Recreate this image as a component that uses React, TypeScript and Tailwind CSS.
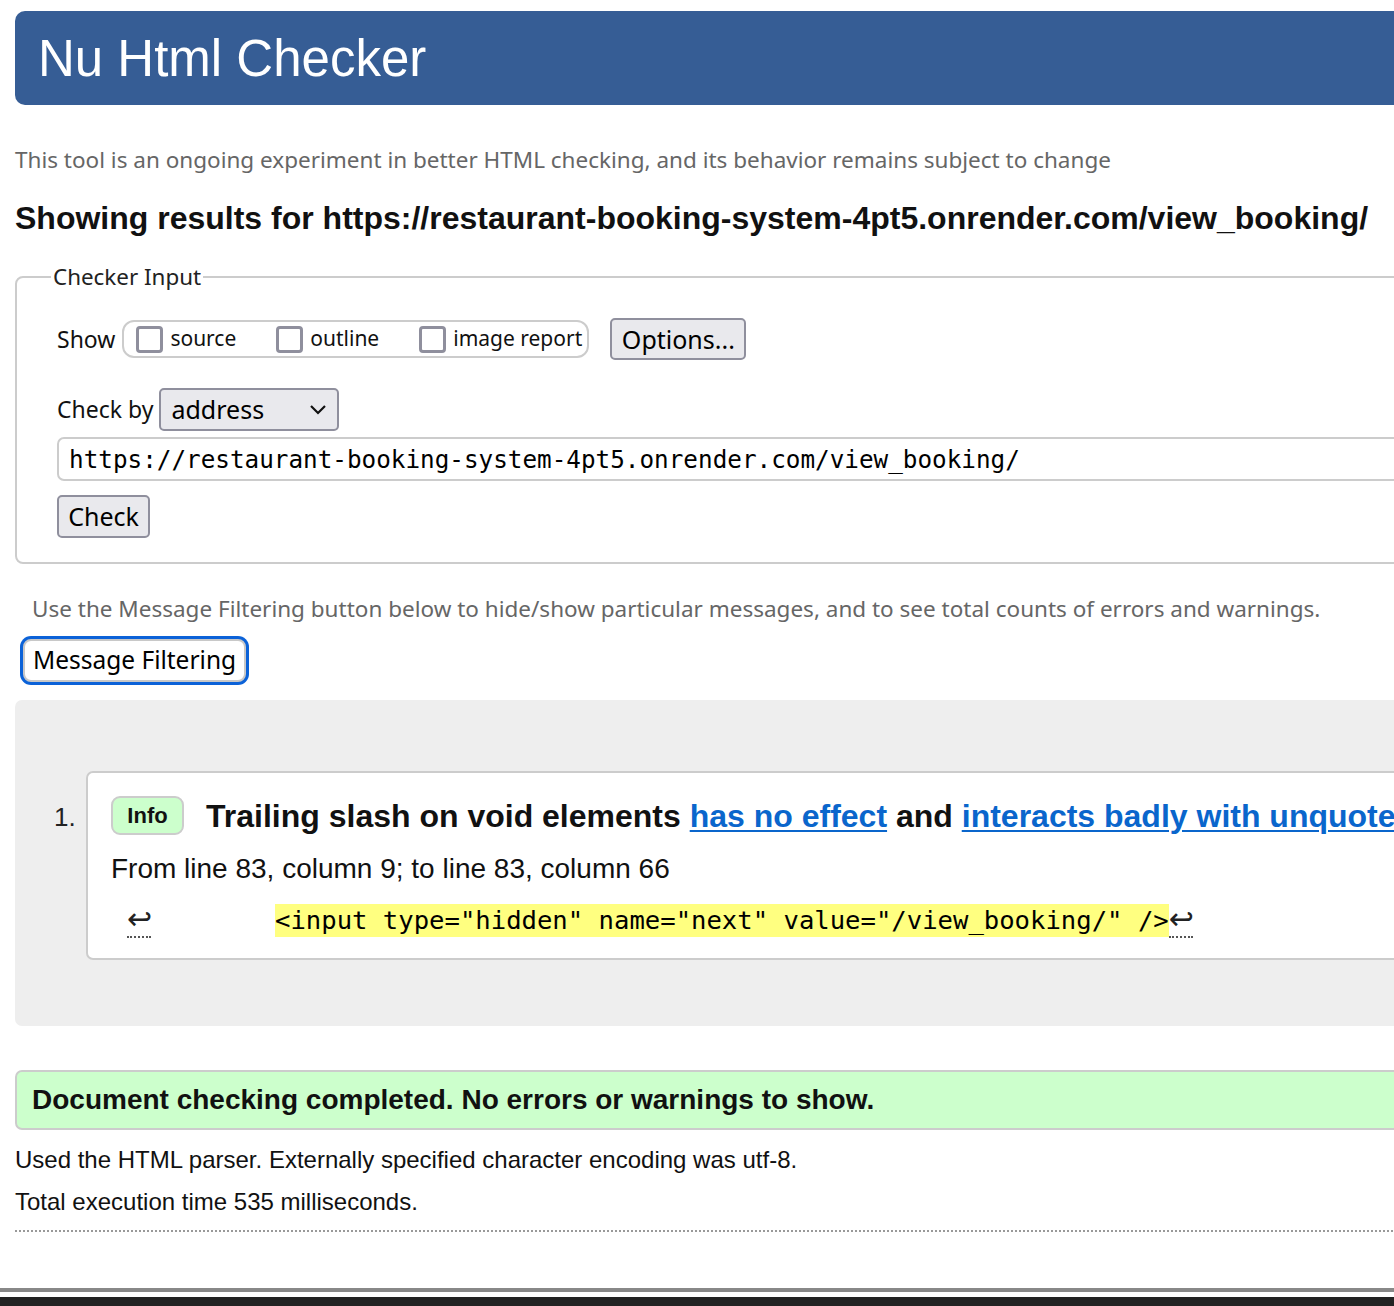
import React from "react";

const SEGOE = "font-['Noto_Sans','Open_Sans',sans-serif]";
const ARIAL = "font-['Liberation_Sans',Arial,sans-serif]";
const MONO = "font-['DejaVu_Sans_Mono','Liberation_Mono',monospace]";

function Checkbox({ label }: { label: string }) {
  return (
    <label className="flex items-center">
      <span className="inline-block w-[27px] h-[27px] border-[3px] border-[#8f8f9d] rounded-[4px] bg-white" />
      <span className="ml-[7px] text-[21px] text-[#111]">{label}</span>
    </label>
  );
}

function Ret() {
  return (
    <span className="inline-block w-[24px] h-[34px] text-center text-[30px] leading-[30px] text-[#222] border-b-2 border-dotted border-[#555] font-['DejaVu_Sans',sans-serif]">
      ↩
    </span>
  );
}

export default function App() {
  return (
    <div className="w-[1394px] h-[1306px] overflow-hidden bg-white flex flex-col text-black">
      {/* Header */}
      <div className="mt-[11px] ml-[15px] w-[1450px] h-[94px] shrink-0 rounded-l-[10px] bg-[#365d95] flex items-center pl-[23px]">
        <h1 className={`${ARIAL} text-[51px] text-white leading-none`}>Nu Html Checker</h1>
      </div>

      <p className={`${SEGOE} mt-[40px] ml-[15px] h-[30px] leading-[30px] text-[22.5px] text-[#666] whitespace-nowrap`}>
        This tool is an ongoing experiment in better HTML checking, and its behavior remains subject to change
      </p>

      <h2 className={`${ARIAL} mt-[26px] ml-[15px] h-[34px] leading-[34px] text-[32px] font-bold text-[#111] whitespace-nowrap`}>
        Showing results for https://restaurant-booking-system-4pt5.onrender.com/view_booking/
      </h2>

      {/* Checker Input */}
      <fieldset className={`${SEGOE} mt-[27px] ml-[15px] w-[1450px] shrink-0 border-2 border-[#cccccc] rounded-l-[8px] pl-[40px] pt-[26px] pb-[24px]`}>
        <legend className="ml-[-6px] px-[2px] text-[22.4px] leading-[30px] text-[#222]">Checker Input</legend>

        <div className="flex items-center h-[42px]">
          <span className="text-[23px] text-[#111]">Show</span>
          <div className="ml-[7px] h-[38px] w-[467px] border-2 border-[#cccccc] rounded-[12px] flex items-center pl-[12px] gap-[40px]">
            <Checkbox label="source" />
            <Checkbox label="outline" />
            <Checkbox label="image report" />
          </div>
          <button className="ml-[21px] h-[42px] w-[136px] bg-[#e9e9ed] border-2 border-[#8f8f9d] rounded-[5px] text-[25px] text-black leading-none">
            Options...
          </button>
        </div>

        <div className="flex items-center h-[43px] mt-[28px]">
          <span className="text-[23px] text-[#111]">Check by</span>
          <div className="ml-[6px] h-[43px] w-[180px] bg-[#e9e9ed] border-2 border-[#8f8f9d] rounded-[5px] flex items-center justify-between pl-[10px] pr-[10px]">
            <span className="text-[25px] text-black">address</span>
            <svg width="18" height="12" viewBox="0 0 18 12" fill="none">
              <path d="M2 2 L9 9 L16 2" stroke="#111" strokeWidth="2.2" />
            </svg>
          </div>
        </div>

        <div className={`${MONO} mt-[6px] h-[44px] w-[1420px] border-2 border-[#cccccc] rounded-[7px] flex items-center pl-[10px] pt-[3px] text-[24.3px] text-black whitespace-nowrap`}>
          https://restaurant-booking-system-4pt5.onrender.com/view_booking/
        </div>

        <button className="mt-[14px] h-[43px] w-[93px] bg-[#e9e9ed] border-2 border-[#8f8f9d] rounded-[5px] text-[25px] text-black leading-none">
          Check
        </button>
      </fieldset>

      <p className={`${SEGOE} mt-[30px] ml-[32px] h-[30px] leading-[30px] text-[22.5px] text-[#666] whitespace-nowrap`}>
        Use the Message Filtering button below to hide/show particular messages, and to see total counts of errors and warnings.
      </p>

      <div className="mt-[15px] ml-[23px] shrink-0">
        <button className={`${SEGOE} h-[43px] w-[223px] bg-white border-2 border-[#c8c8c8] rounded-[8px] ring-[3px] ring-[#0b62d8] text-[24.5px] text-black leading-none`}>
          Message Filtering
        </button>
      </div>

      {/* Messages */}
      <div className={`${ARIAL} mt-[18px] ml-[15px] w-[1450px] shrink-0 bg-[#eeeeee] rounded-l-[7px] pt-[71px] pb-[66px] flex`}>
        <div className="w-[71px] shrink-0 text-[26px] text-[#222] pl-[39px] pt-[31px] leading-[30px]">1.</div>
        <div className="w-[1360px] h-[189px] shrink-0 bg-white border-2 border-[#cccccc] rounded-[7px] pl-[23px] pt-[23px] overflow-hidden">
          <div className="flex items-center h-[39px] whitespace-nowrap">
            <span className="shrink-0 h-[39px] w-[73px] flex items-center justify-center bg-[#ccffcc] border-2 border-[#cccccc] rounded-[9px] text-[22px] font-bold text-[#111]">
              Info
            </span>
            <span className="ml-[22px] text-[32px] font-bold text-[#111]">
              Trailing slash on void elements{" "}
              <a className="text-[#0a66cc] underline underline-offset-[3px] decoration-2" href="#">has no effect</a>
              {" "}and{" "}
              <a className="text-[#0a66cc] underline underline-offset-[3px] decoration-2" href="#">interacts badly with unquoted attribute values</a>
            </span>
          </div>
          <p className="mt-[19px] h-[30px] leading-[30px] text-[28px] text-[#111] whitespace-nowrap">
            From line 83, column 9; to line 83, column 66
          </p>
          <div className={`${MONO} mt-[20px] ml-[16px] flex items-start text-[25.6px] leading-[33px] whitespace-pre`}>
            <Ret />
            <span className="w-[124px]" />
            <span className="bg-[#ffff80] text-black">{'<input type="hidden" name="next" value="/view_booking/" />'}</span>
            <Ret />
          </div>
        </div>
      </div>

      <div className={`${ARIAL} mt-[44px] ml-[15px] w-[1450px] h-[60px] shrink-0 bg-[#ccffcc] border-2 border-[#cccccc] rounded-l-[7px] flex items-center pl-[15px]`}>
        <p className="text-[28px] font-bold text-[#111]">Document checking completed. No errors or warnings to show.</p>
      </div>

      <p className={`${ARIAL} mt-[15px] ml-[15px] h-[30px] leading-[30px] text-[24px] text-[#111]`}>
        Used the HTML parser. Externally specified character encoding was utf-8.
      </p>
      <p className={`${ARIAL} mt-[12px] ml-[15px] h-[30px] leading-[30px] text-[24px] text-[#111]`}>
        Total execution time 535 milliseconds.
      </p>
      <div className="mt-[13px] ml-[15px] w-[1450px] border-t-2 border-dotted border-[#999]" />

      <div className="mt-[56px] w-full h-[4px] bg-[#888888] shrink-0" />
      <div className="mt-[5px] w-full h-[10px] bg-[#222222] shrink-0" />
    </div>
  );
}
